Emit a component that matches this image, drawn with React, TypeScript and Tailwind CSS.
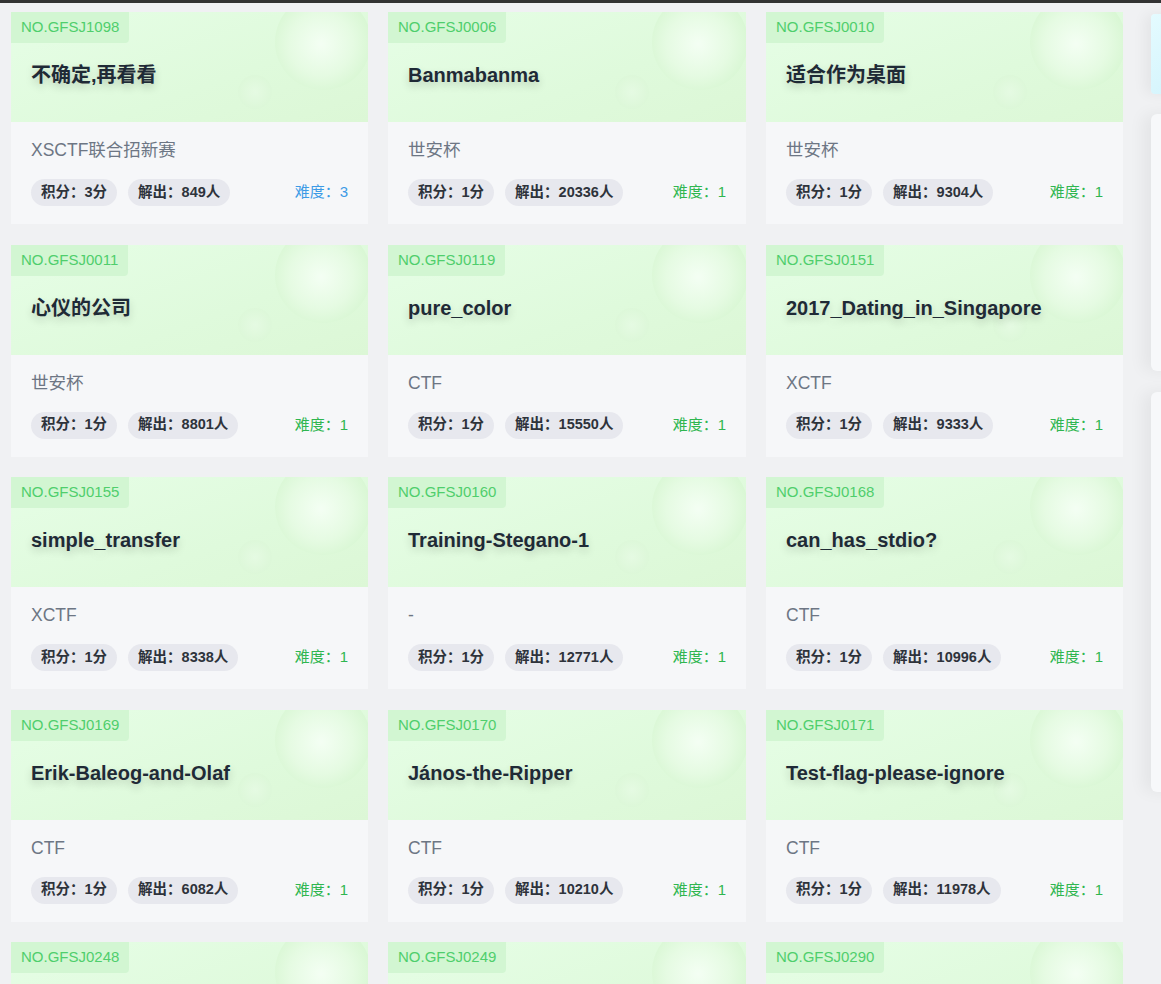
import React from "react";

interface Challenge {
  no: string;
  title: string;
  source: string;
  score: number;
  solved: number;
  level: number;
}

const challenges: Challenge[] = [
  { no: "GFSJ1098", title: "不确定,再看看", source: "XSCTF联合招新赛", score: 3, solved: 849, level: 3 },
  { no: "GFSJ0006", title: "Banmabanma", source: "世安杯", score: 1, solved: 20336, level: 1 },
  { no: "GFSJ0010", title: "适合作为桌面", source: "世安杯", score: 1, solved: 9304, level: 1 },
  { no: "GFSJ0011", title: "心仪的公司", source: "世安杯", score: 1, solved: 8801, level: 1 },
  { no: "GFSJ0119", title: "pure_color", source: "CTF", score: 1, solved: 15550, level: 1 },
  { no: "GFSJ0151", title: "2017_Dating_in_Singapore", source: "XCTF", score: 1, solved: 9333, level: 1 },
  { no: "GFSJ0155", title: "simple_transfer", source: "XCTF", score: 1, solved: 8338, level: 1 },
  { no: "GFSJ0160", title: "Training-Stegano-1", source: "-", score: 1, solved: 12771, level: 1 },
  { no: "GFSJ0168", title: "can_has_stdio?", source: "CTF", score: 1, solved: 10996, level: 1 },
  { no: "GFSJ0169", title: "Erik-Baleog-and-Olaf", source: "CTF", score: 1, solved: 6082, level: 1 },
  { no: "GFSJ0170", title: "János-the-Ripper", source: "CTF", score: 1, solved: 10210, level: 1 },
  { no: "GFSJ0171", title: "Test-flag-please-ignore", source: "CTF", score: 1, solved: 11978, level: 1 },
  { no: "GFSJ0248", title: "hit-the-core", source: "CTF", score: 1, solved: 9000, level: 1 },
  { no: "GFSJ0249", title: "glance-50", source: "CTF", score: 1, solved: 9000, level: 1 },
  { no: "GFSJ0290", title: "Ditf", source: "CTF", score: 1, solved: 9000, level: 1 },
];

const ChallengeCard: React.FC<{ item: Challenge }> = ({ item }) => {
  return (
    <div className="flex flex-col overflow-hidden h-[212px]">
      {/* header with soft bubbles */}
      <div className="relative h-[110px] shrink-0 overflow-hidden bg-[linear-gradient(160deg,#e6fee6_0%,#dffadc_60%,#dcf7d6_100%)]">
        <div className="absolute left-[264px] top-[-18px] w-[96px] h-[96px] rounded-full bg-[radial-gradient(circle_at_48%_52%,#f6fff6_0%,#e6fbe3_45%,#c9f2c2_100%)] opacity-90" />
        <div className="absolute left-[227px] top-[63px] w-[34px] h-[34px] rounded-full bg-[radial-gradient(circle_at_50%_50%,#e8fbe6_0%,#dcf7d8_70%,#d0f2ca_100%)] opacity-70" />
        <div className="relative inline-flex items-center h-[31px] px-[10px] bg-[#d2f6d2] rounded-br-[4px] text-[15px] text-[#4fce6c]">
          NO.{item.no}
        </div>
        <div className="relative pl-[20px] mt-[18px] text-[20px] leading-[28px] font-bold text-[#1f2a36] [text-shadow:0_4px_8px_rgba(0,0,0,0.18)]">
          {item.title}
        </div>
      </div>
      {/* body */}
      <div className="flex-1 bg-[#f6f7f9] px-[20px] pt-[16px]">
        <div className="text-[17.5px] leading-[25px] text-[#6d7684]">{item.source}</div>
        <div className="flex items-center mt-[16px]">
          <span className="h-[27px] inline-flex items-center px-[10px] rounded-full bg-[#e7e8ee] text-[14.5px] font-bold text-[#2e333b]">
            积分：{item.score}分
          </span>
          <span className="ml-[11px] h-[27px] inline-flex items-center px-[10px] rounded-full bg-[#e7e8ee] text-[14.5px] font-bold text-[#2e333b]">
            解出：{item.solved}人
          </span>
          <span
            className={
              item.level === 3
                ? "ml-auto text-[15px] text-[#3d9be6]"
                : "ml-auto text-[15px] text-[#2fb650]"
            }
          >
            难度：{item.level}
          </span>
        </div>
      </div>
    </div>
  );
};

export default function App() {
  return (
    <div className="h-[984px] overflow-hidden bg-[#f0f1f3] font-['Liberation_Sans','Noto_Sans_CJK_SC',sans-serif]">
      <div className="h-[3px] bg-[#333333]" />
      <div className="flex pt-[9px] pl-[11px]">
        <div className="grid grid-cols-[357px_358px_357px] gap-x-[20px] gap-y-[20.5px] shrink-0">
          {challenges.map((c) => (
            <ChallengeCard key={c.no} item={c} />
          ))}
        </div>
        {/* right sidebar, mostly off screen */}
        <div className="ml-[28px] w-[300px] shrink-0 flex flex-col">
          <div className="mt-[2px] h-[80px] rounded-l-[4px] bg-[linear-gradient(135deg,#e4fbff_0%,#cdf1fb_40%,#c6eefa_100%)] shadow-[-6px_0_14px_rgba(0,0,0,0.05)]" />
          <div className="mt-[20px] h-[257px] rounded-[6px] bg-[#f7f8fa] shadow-[-8px_0_16px_rgba(0,0,0,0.05)]" />
          <div className="mt-[21px] h-[400px] rounded-[6px] bg-[#f7f8fa] shadow-[-8px_0_16px_rgba(0,0,0,0.05)]" />
        </div>
      </div>
    </div>
  );
}
